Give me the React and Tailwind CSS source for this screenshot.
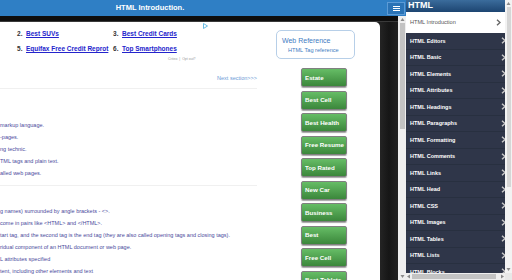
import React from 'react';

const SIDE_ITEMS = [
  'HTML Editors', 'HTML Basic', 'HTML Elements', 'HTML Attributes', 'HTML Headings',
  'HTML Paragraphs', 'HTML Formatting', 'HTML Comments', 'HTML Links', 'HTML Head',
  'HTML CSS', 'HTML Images', 'HTML Tables', 'HTML Lists', 'HTML Blocks',
];

const BUTTONS = [
  'Estate', 'Best Cell', 'Best Health', 'Free Resume', 'Top Rated',
  'New Car', 'Business', 'Best', 'Free Cell', 'Best Tablets',
];

const LINES_A = [
  'markup language.',
  '-pages.',
  'ng technic.',
  'TML tags and plain text.',
  'alled web pages.',
];

const LINES_B = [
  'g names) surrounded by angle brackets - <>.',
  'come in pairs like <HTML> and </HTML>.',
  'tart tag, and the second tag is the end tag (they are also called opening tags and closing tags).',
  'ridual component of an HTML document or web page.',
  'L attributes specified',
  'tent, including other elements and text',
];

function Chevron({ color }) {
  return (
    <svg width="5" height="7" viewBox="0 0 5 7" className="shrink-0">
      <path d="M1 0.8 L4 3.5 L1 6.2" fill="none" stroke={color} strokeWidth="1.4" />
    </svg>
  );
}

function Tri({ dir }) {
  const pts = {
    up: '0.5,4 2.5,1 4.5,4',
    down: '0.5,1 2.5,4 4.5,1',
    left: '4,0.5 1,2.5 4,4.5',
    right: '1,0.5 4,2.5 1,4.5',
  }[dir];
  return (
    <svg width="5" height="5" viewBox="0 0 5 5" className="shrink-0">
      <polygon points={pts} fill="#8a8a8a" />
    </svg>
  );
}

function AdLink({ n, text }) {
  return (
    <div className="flex items-center gap-[3px]">
      <span className="text-[#333] font-bold w-[6px]">{n}.</span>
      <span className="text-[#2424cc] font-bold underline">{text}</span>
    </div>
  );
}

export default function App() {
  return (
    <div className="w-[512px] h-[280px] overflow-hidden flex bg-[#1c1c1c]" style={{ fontFamily: '"Liberation Sans", Arial, sans-serif' }}>
      {/* main page */}
      <div className="w-[406px] h-full flex flex-col">
        <div className="h-[16px] bg-[#2f7fc5] flex items-center shrink-0">
          <div className="w-[300px] text-center text-white font-bold text-[7.5px]">HTML Introduction.</div>
          <div className="flex-1" />
          <div className="w-[18px] h-[13px] mr-[1px] border border-[#5c9bd6] bg-[#2a73b6] flex flex-col items-center justify-center gap-[1px]">
            <div className="w-[7px] h-[1px] bg-white" />
            <div className="w-[7px] h-[1px] bg-white" />
            <div className="w-[7px] h-[1px] bg-white" />
          </div>
        </div>
        <div className="flex-1 flex min-h-0">
          <div className="w-[398px] flex flex-col">
            <div className="h-[6px] bg-[#0e0e0e] border-b border-[#3a3a3a] shrink-0" />
            <div className="flex-1 flex min-h-0">
              <div className="w-[380px] bg-white rounded-tr-[5px] flex overflow-hidden">
                {/* left column */}
                <div className="w-[257px] flex flex-col shrink-0">
                  <div className="relative h-[42px] pl-[17px] pt-[8px] text-[6.5px] leading-[8px]">
                    <div className="grid grid-cols-[96px_100px] gap-y-[7px]">
                      <AdLink n="2" text="Best SUVs" />
                      <AdLink n="3" text="Best Credit Cards" />
                      <AdLink n="5" text="Equifax Free Credit Reprot" />
                      <AdLink n="6" text="Top Smartphones" />
                    </div>
                    <div className="absolute left-[168px] top-[33px] text-[3.5px] text-[#999]">Criteo&nbsp;&nbsp;|&nbsp;&nbsp;Opt out?</div>
                    <svg width="5" height="6" viewBox="0 0 5 6" className="absolute left-[203px] top-[1px]">
                      <path d="M0.5 0.5 L4.5 3 L0.5 5.5 Z" fill="none" stroke="#58b4e0" strokeWidth="0.9" />
                    </svg>
                  </div>
                  <div className="mt-[10px] text-right text-[5.5px] leading-[8px] text-[#6b9ad6]">Next section&gt;&gt;&gt;</div>
                  <div className="mt-[6px] h-px bg-[#f0f0f0]" />
                  <div className="mt-[33px] flex flex-col gap-[4.5px] text-[5.5px] leading-[7.5px] text-[#4a4a9c]">
                    {LINES_A.map(t => <div key={t}>{t}</div>)}
                  </div>
                  <div className="mt-[7px] h-px bg-[#f0f0f0]" />
                  <div className="mt-[22px] flex flex-col gap-[4.5px] text-[5.5px] leading-[7.5px] text-[#4a4a9c] whitespace-nowrap">
                    {LINES_B.map(t => <div key={t}>{t}</div>)}
                  </div>
                </div>
                {/* right column */}
                <div className="ml-[19px] flex flex-col">
                  <div className="mt-[8px] w-[79px] h-[29px] shrink-0 border border-[#b7cfe8] rounded-[5px] flex flex-col justify-center">
                    <div className="pl-[5px] text-[7px] leading-[10px] text-[#3f7cc2]">Web Reference</div>
                    <div className="pl-[11px] text-[5.6px] leading-[8px] text-[#3f7cc2]">HTML Tag reference</div>
                  </div>
                  <div className="mt-[9px] ml-[25px] flex flex-col gap-[3.5px]">
                    {BUTTONS.map(b => (
                      <div key={b} className="w-[46px] h-[19px] shrink-0 rounded-[2px] border border-[#808080] bg-linear-to-b from-[#66bd66] to-[#3b873b] shadow-[0_1px_1px_rgba(0,0,0,0.35)] flex items-center pl-[3px] text-white font-bold text-[6.2px] whitespace-nowrap overflow-hidden">
                        {b}
                      </div>
                    ))}
                  </div>
                </div>
              </div>
              <div className="flex-1 bg-linear-to-r from-[#242424] via-[#161616] to-[#202020]" />
            </div>
          </div>
          {/* page scrollbar */}
          <div className="w-[8px] bg-[#efefef] flex flex-col items-center">
            <div className="h-[7px] flex items-center"><Tri dir="up" /></div>
            <div className="w-[5px] h-[106px] bg-[#c3c3c3]" />
            <div className="flex-1" />
            <div className="h-[7px] flex items-center"><Tri dir="down" /></div>
          </div>
        </div>
      </div>

      {/* sidebar */}
      <div className="w-[99px] h-full flex flex-col bg-[#2f3649]">
        <div className="h-[12px] shrink-0 bg-linear-to-b from-[#3b6c9c] to-[#1d4571] flex items-center pl-[2px] text-white font-bold text-[9px]">HTML</div>
        <div className="h-[21px] shrink-0 bg-white flex items-center justify-between pl-[4px] pr-[4px] text-[5.6px] text-[#555]">
          <span>HTML Introduction</span>
          <Chevron color="#666" />
        </div>
        <div className="flex-1 min-h-0 overflow-hidden">
          {SIDE_ITEMS.map(s => (
            <div key={s} className="h-[16.5px] border-b border-[#283040] flex items-center justify-between pl-[4px] text-white font-bold text-[5.5px]">
              <span>{s}</span>
              <div className="mr-[-1px]"><Chevron color="#c9c9c9" /></div>
            </div>
          ))}
        </div>
        <div className="h-[7px] shrink-0 bg-[#efefef] flex items-center">
          <Tri dir="left" />
          <div className="ml-[1px] w-[84px] h-[5px] bg-[#c3c3c3]" />
          <div className="flex-1" />
          <Tri dir="right" />
        </div>
      </div>
      {/* sidebar scrollbar */}
      <div className="w-[7px] h-full bg-[#f3f3f3] flex flex-col items-center">
        <div className="h-[7px] flex items-center"><Tri dir="up" /></div>
        <div className="w-[4px] h-[180px] bg-[#d6d6d6]" />
        <div className="flex-1" />
        <div className="h-[7px] flex items-center"><Tri dir="down" /></div>
        <div className="h-[7px] w-full bg-[#e8e8e8]" />
      </div>
    </div>
  );
}
